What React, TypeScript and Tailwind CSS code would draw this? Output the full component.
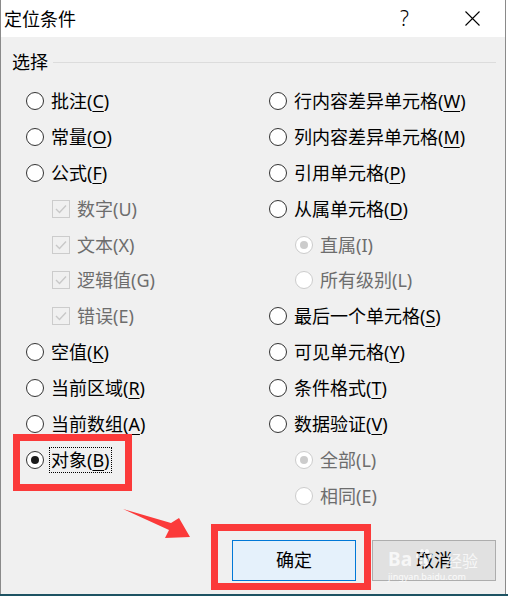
import React from "react";

const FONT = { fontFamily: '"Noto Sans", "Noto Sans CJK SC", sans-serif' };

type Item = {
  kind: "radio" | "check";
  label: string;
  key: string;
  ul?: boolean;
  indent?: boolean;
  disabled?: boolean;
  selected?: boolean;
  focus?: boolean;
};

function Radio({ disabled, selected }: { disabled?: boolean; selected?: boolean }) {
  return (
    <span
      className={
        "flex h-[18px] w-[18px] shrink-0 items-center justify-center rounded-full border bg-white " +
        (disabled ? "border-[#cccccc]" : "border-[#333333]")
      }
    >
      {selected && (
        <span className={"h-[8px] w-[8px] rounded-full " + (disabled ? "bg-[#cccccc]" : "bg-[#1a1a1a]")} />
      )}
    </span>
  );
}

function Check() {
  return (
    <span className="flex h-[18px] w-[18px] shrink-0 items-center justify-center border border-[#cccccc]">
      <svg width="12" height="10" viewBox="0 0 12 10">
        <path d="M1 5 L4.5 8.5 L11 1.5" fill="none" stroke="#c8c8c8" strokeWidth="1.4" />
      </svg>
    </span>
  );
}

function Row({ it }: { it: Item }) {
  return (
    <div className={"flex h-[35.9px] items-center " + (it.indent ? "pl-[26px]" : "")}>
      {it.kind === "radio" ? <Radio disabled={it.disabled} selected={it.selected} /> : <Check />}
      <span
        className={
          "ml-[5px] flex h-[26px] items-center whitespace-nowrap px-[1px] text-[18px] leading-none border " +
          (it.focus ? "border-dotted border-black" : "border-transparent") +
          (it.disabled ? " text-[#6d6d6d]" : " text-black")
        }
      >
        {it.label}(
        {it.ul ? <span className="underline underline-offset-[3px] decoration-1">{it.key}</span> : it.key})
      </span>
    </div>
  );
}

const left: Item[] = [
  { kind: "radio", label: "批注", key: "C", ul: true },
  { kind: "radio", label: "常量", key: "O", ul: true },
  { kind: "radio", label: "公式", key: "F", ul: true },
  { kind: "check", label: "数字", key: "U", indent: true, disabled: true },
  { kind: "check", label: "文本", key: "X", indent: true, disabled: true },
  { kind: "check", label: "逻辑值", key: "G", indent: true, disabled: true },
  { kind: "check", label: "错误", key: "E", indent: true, disabled: true },
  { kind: "radio", label: "空值", key: "K", ul: true },
  { kind: "radio", label: "当前区域", key: "R", ul: true },
  { kind: "radio", label: "当前数组", key: "A", ul: true },
  { kind: "radio", label: "对象", key: "B", ul: true, selected: true, focus: true },
];

const right: Item[] = [
  { kind: "radio", label: "行内容差异单元格", key: "W", ul: true },
  { kind: "radio", label: "列内容差异单元格", key: "M", ul: true },
  { kind: "radio", label: "引用单元格", key: "P", ul: true },
  { kind: "radio", label: "从属单元格", key: "D", ul: true },
  { kind: "radio", label: "直属", key: "I", indent: true, disabled: true, selected: true },
  { kind: "radio", label: "所有级别", key: "L", indent: true, disabled: true },
  { kind: "radio", label: "最后一个单元格", key: "S", ul: true },
  { kind: "radio", label: "可见单元格", key: "Y", ul: true },
  { kind: "radio", label: "条件格式", key: "T", ul: true },
  { kind: "radio", label: "数据验证", key: "V", ul: true },
  { kind: "radio", label: "全部", key: "L", indent: true, disabled: true, selected: true },
  { kind: "radio", label: "相同", key: "E", indent: true, disabled: true },
];

export default function App() {
  return (
    <div className="relative h-[596px] w-[508px] overflow-hidden bg-white" style={FONT}>
      <div className="flex h-[594px] w-[506px] flex-col border-l border-r border-[#8a8a8a] bg-[#f0f0f0]">
        {/* title bar */}
        <div className="flex h-[37px] shrink-0 items-center bg-white">
          <span className="ml-[3px] text-[18px] leading-none text-black">定位条件</span>
          <span className="ml-auto mr-[56px] text-[21px] font-light leading-none text-black">?</span>
          <svg className="mr-[25px]" width="15" height="15" viewBox="0 0 15 15">
            <path d="M0.5 0.5 L14.5 14.5 M14.5 0.5 L0.5 14.5" stroke="#000" strokeWidth="1.1" />
          </svg>
        </div>

        {/* body */}
        <div className="flex flex-1 flex-col pt-[13px]">
          <div className="flex h-[24px] items-center pl-[11px] pr-[9px]">
            <span className="text-[18px] leading-none text-black">选择</span>
            <div className="ml-[5px] h-px flex-1 bg-[#dcdcdc]" />
          </div>

          <div className="mt-[9px] grid grid-cols-[243px_1fr] pl-[25px]">
            <div className="flex flex-col">
              {left.map((it, i) => (
                <Row key={i} it={it} />
              ))}
            </div>
            <div className="flex flex-col">
              {right.map((it, i) => (
                <Row key={i} it={it} />
              ))}
            </div>
          </div>

          <div className="mt-[26px] flex justify-end gap-[16px] pr-[9px]">
            <button className="flex h-[41px] w-[124px] items-center justify-center border border-[#0078d7] bg-[#e5f1fb] text-[18px] leading-none text-black">
              确定
            </button>
            <button className="relative flex h-[41px] w-[124px] items-center justify-center border border-[#adadad] bg-[#e1e1e1] text-[18px] leading-none text-black">
              取消
              <span className="pointer-events-none absolute left-[15px] top-[9px] flex items-end text-[19px] font-bold leading-none text-white/75">
                Ba
                <svg width="22" height="22" viewBox="0 0 22 22" className="mx-[1px] -mt-[8px]">
                  <g fill="rgba(255,255,255,0.8)">
                    <ellipse cx="11" cy="15" rx="5" ry="4.5" />
                    <ellipse cx="5" cy="9" rx="2" ry="2.6" />
                    <ellipse cx="9" cy="4.5" rx="2" ry="2.6" />
                    <ellipse cx="14" cy="4.5" rx="2" ry="2.6" />
                    <ellipse cx="18" cy="9" rx="2" ry="2.6" />
                  </g>
                </svg>
                <span className="ml-[10px] text-[16px] font-normal">经验</span>
              </span>
              <span className="pointer-events-none absolute left-[15px] top-[31px] text-[9px] leading-none text-white/85">
                jingyan.baidu.com
              </span>
            </button>
          </div>
        </div>
      </div>
      <div className="h-[2px] w-full bg-[#1d5363]" />

      {/* annotations */}
      <div className="absolute left-[13px] top-[434px] h-[57px] w-[119px] border-[7px] border-[#fb3a3a]" />
      <div className="absolute left-[211px] top-[524px] h-[66px] w-[160px] border-[7px] border-[#fb3a3a]" />
      <svg className="absolute left-0 top-0" width="508" height="596" viewBox="0 0 508 596">
        <polygon points="123,509 171,523 179,518 190,537 165,538 169,530" fill="#fb3a3a" />
      </svg>
    </div>
  );
}
